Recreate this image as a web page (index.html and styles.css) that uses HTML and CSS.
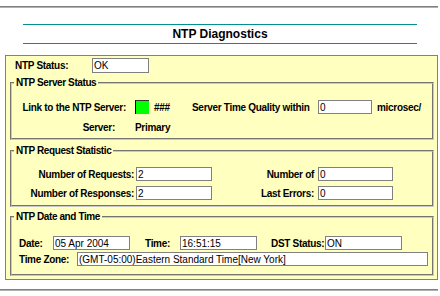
FILE: index.html
```html
<!DOCTYPE html>
<html lang="en">
<head>
    <meta charset="UTF-8">
    <title>NTP Diagnostics</title>
    <link rel="stylesheet" href="styles.css">
</head>
<body>
    <div class="rule top"></div>

    <div class="title">NTP Diagnostics</div>

    <div class="panel">
        <div class="row status">
            <span class="lbl w-status">NTP Status:</span>
            <input type="text" class="box w-ok" value="OK" readonly />
        </div>

        <fieldset class="group g-server">
            <legend>NTP Server Status</legend>
            <div class="row">
                <span class="lbl right w-link">Link to the NTP Server:</span>
                <span class="led"></span>
                <span class="lbl w-hash">###</span>
                <span class="lbl w-quality">Server Time Quality within</span>
                <input type="text" class="box w-micro" value="0" readonly />
                <span class="lbl unit">microsec/</span>
            </div>
            <div class="row gap-6">
                <span class="lbl right w-server">Server:</span>
                <span class="lbl primary">Primary</span>
            </div>
        </fieldset>

        <fieldset class="group g-request">
            <legend>NTP Request Statistic</legend>
            <div class="row">
                <span class="lbl right w-req">Number of Requests:</span>
                <input type="text" class="box w-num" value="2" readonly />
                <span class="lbl right w-err">Number of</span>
                <input type="text" class="box w-num2" value="0" readonly />
            </div>
            <div class="row gap-5">
                <span class="lbl right w-req">Number of Responses:</span>
                <input type="text" class="box w-num" value="2" readonly />
                <span class="lbl right w-err">Last Errors:</span>
                <input type="text" class="box w-num2" value="0" readonly />
            </div>
        </fieldset>

        <fieldset class="group g-date">
            <legend>NTP Date and Time</legend>
            <div class="row indent">
                <span class="lbl w-date">Date:</span>
                <input type="text" class="box w-dt" value="05 Apr 2004" readonly />
                <span class="lbl w-time">Time:</span>
                <input type="text" class="box w-dt" value="16:51:15" readonly />
                <span class="lbl w-dst">DST Status:</span>
                <input type="text" class="box w-dt" value="ON" readonly />
            </div>
            <div class="row indent gap-2">
                <span class="lbl w-zone">Time Zone:</span>
                <input type="text" class="box w-tz" value="(GMT-05:00)Eastern Standard Time[New York]" readonly />
            </div>
        </fieldset>
    </div>

    <div class="rule bottom"></div>
</body>
</html>
```

FILE: styles.css
```css
body {
    margin: 0;
    width: 440px;
    color: #000;
    font-family: "Liberation Sans", Arial, sans-serif;
    font-size: 10px;
}

.rule {
    width: 438px;
    border-top: 1px solid #808080;
    border-bottom: 1px solid #b0b0b0;
}

.rule.top {
    margin-top: 6px;
}

.rule.bottom {
    margin-top: 9px;
}

.title {
    margin: 16px 23px 0;
    width: 394px;
    border-top: 1px solid #009090;
    border-bottom: 1px solid #009090;
    line-height: 18px;
    text-align: center;
    font-size: 12px;
    font-weight: bold;
}

.panel {
    box-sizing: border-box;
    width: 433px;
    margin: 11px 0 0 5px;
    padding: 2px 3px 3px 4px;
    background-color: #ffffc0;
    border: 1px solid #808080;
}

.row {
    display: flex;
    align-items: center;
    height: 14px;
}

.row.status {
    height: 15px;
    padding-left: 5px;
}

.gap-2 { margin-top: 2px; }
.gap-5 { margin-top: 5px; }
.gap-6 { margin-top: 6px; }

.indent {
    padding-left: 7px;
}

.lbl {
    font-weight: bold;
    letter-spacing: -0.3px;
    white-space: nowrap;
    flex: none;
}

.right {
    text-align: right;
}

.box {
    box-sizing: border-box;
    flex: none;
    height: 14px;
    margin: 0;
    padding: 0 1px;
    border: 1px solid #808080;
    background: #fff;
    color: #000;
    font-family: "Liberation Sans", Arial, sans-serif;
    font-size: 10px;
}

/* fieldsets del panel */
.group {
    margin: 4px 0 0;
    padding: 0;
    border: 2px groove #c8c8c8;
    min-width: 0;
}

.group legend {
    margin-left: 2px;
    padding: 0 2px;
    line-height: 12px;
    font-weight: bold;
    letter-spacing: -0.4px;
    background-color: #ffffc0;
}

.g-server { padding: 11px 0 4px; }
.g-request { margin-top: 5px; padding: 10px 0 5px; }
.g-date { padding: 13px 0 8px; }

.w-status { width: 77px; }
.w-ok { width: 57px; height: 15px; }

.w-link { width: 114px; }
.led {
    width: 14px;
    height: 14px;
    margin-left: 9px;
    box-sizing: border-box;
    background-color: #00ff00;
    border-left: 1px solid #000;
    border-top: 1px solid #303030;
    flex: none;
}
.w-hash { width: 38px; margin-left: 5px; }
.w-quality { width: 121px; }
.w-micro { width: 54px; margin-left: 5px; }
.unit { margin-left: 5px; }

.w-server { width: 103px; }
.primary { margin-left: 20px; }

.w-req { width: 122px; }
.w-num { width: 76px; margin-left: 2px; }
.w-err { width: 102px; }
.w-num2 { width: 75px; margin-left: 4px; }

.w-date { width: 34px; }
.w-dt { width: 77px; }
.w-time { width: 35px; margin-left: 15px; }
.w-dst { width: 54px; margin-left: 14px; }
.w-zone { width: 58px; }
.w-tz { width: 351px; }
```
